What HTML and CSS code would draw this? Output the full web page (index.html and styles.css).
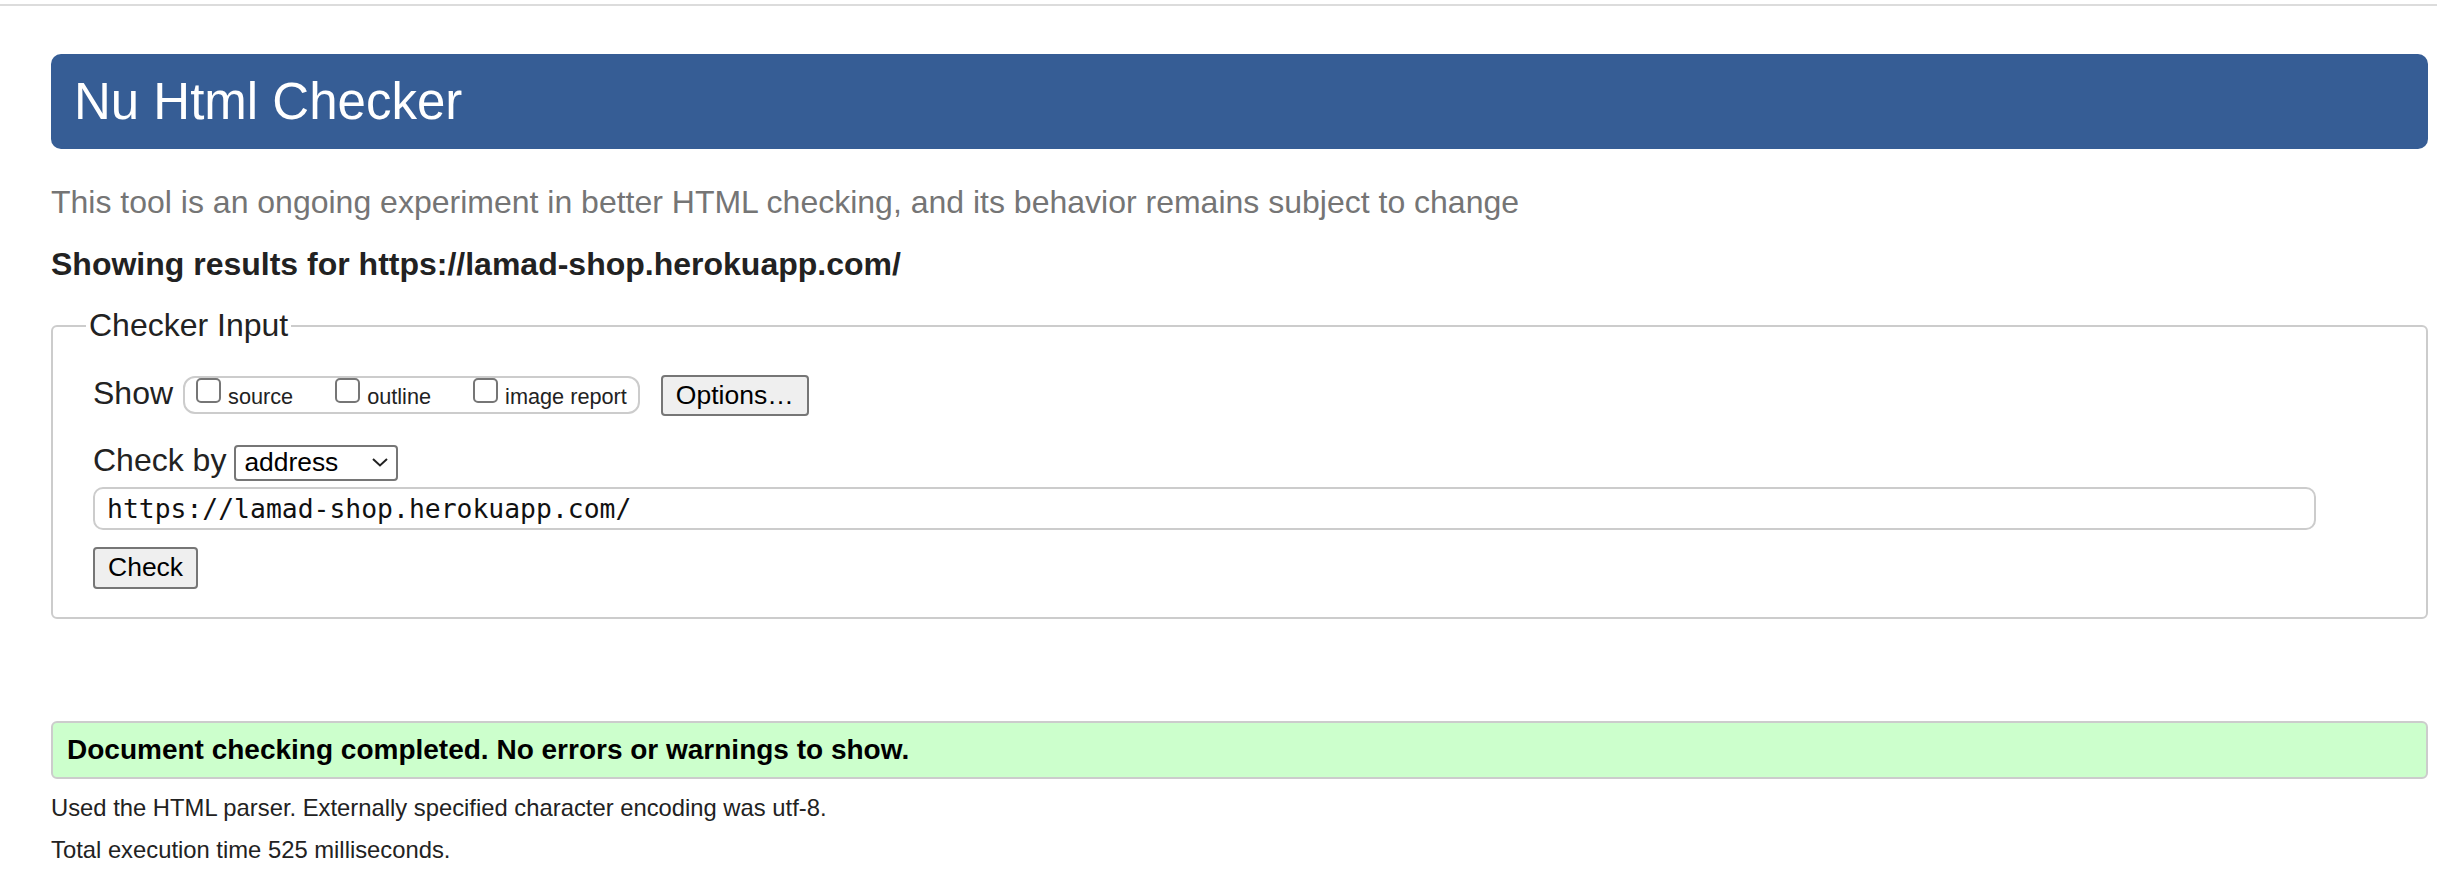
FILE: index.html
```html
<!DOCTYPE html>
<html lang="en">
<head>
<meta charset="utf-8">
<title>Showing results for https://lamad-shop.herokuapp.com/ - Nu Html Checker</title>
<link rel="stylesheet" href="styles.css">
</head>
<body>
<div class="topline"></div>
<div class="page">
  <h1 class="title">Nu Html Checker</h1>
  <p class="about">This tool is an ongoing experiment in better HTML checking, and its behavior remains subject to change</p>
  <p class="showing">Showing results for https://lamad-shop.herokuapp.com/</p>
  <form class="checker">
    <fieldset class="input-box">
      <legend>Checker Input</legend>
      <div class="row row-show">
        <span class="lbl">Show</span>
        <div class="group">
          <label class="opt"><input type="checkbox"><span>source</span></label>
          <label class="opt"><input type="checkbox"><span>outline</span></label>
          <label class="opt"><input type="checkbox"><span>image report</span></label>
        </div>
        <button type="button" class="btn options">Options…</button>
      </div>
      <div class="row row-by">
        <span class="lbl">Check by</span>
        <div class="select">
          <span>address</span>
          <svg class="chev" width="16" height="9" viewBox="0 0 16 9"><polyline points="1,1 8,7.5 15,1" fill="none" stroke="#222" stroke-width="2"/></svg>
        </div>
      </div>
      <input class="url" type="text" value="https://lamad-shop.herokuapp.com/">
      <button type="button" class="btn check">Check</button>
    </fieldset>
  </form>
  <div class="success">Document checking completed. No errors or warnings to show.</div>
  <p class="meta">Used the HTML parser. Externally specified character encoding was utf-8.</p>
  <p class="meta">Total execution time 525 milliseconds.</p>
</div>
</body>
</html>
```
FILE: styles.css
```css
body {
  margin: 0;
  font-family: "Liberation Sans", Arial, sans-serif;
  color: #222;
  background: #fff;
}
.topline {
  height: 2px;
  margin-top: 4px;
  background: #dcdcdc;
}
.page {
  padding: 0 9px 0 51px;
}
.title {
  margin: 48px 0 0;
  height: 95px;
  background: #365d95;
  color: #fff;
  border-radius: 10px;
  font-size: 51px;
  font-weight: normal;
  line-height: 95px;
  padding: 0 23px;
}
.about {
  margin: 35.4px 0 0;
  font-size: 32px;
  line-height: 37px;
  color: #757575;
}
.showing {
  margin: 24.6px 0 0;
  font-size: 32px;
  line-height: 37px;
  font-weight: bold;
}
.checker {
  margin: 25.5px 0 0;
}
.input-box {
  margin: 0;
  min-width: 0;
  border: 2px solid #ccc;
  border-radius: 6px;
  padding: 31.5px 0 28px 40px;
}
.input-box legend {
  font-size: 32px;
  line-height: 35px;
  padding: 0 3px;
  margin-left: -7px;
}
.row {
  display: flex;
  align-items: flex-start;
}
.lbl {
  font-size: 32px;
  line-height: 37px;
}
.row-show .lbl {
  margin-right: 10px;
}
.group {
  display: flex;
  align-items: flex-start;
  gap: 42px;
  height: 38px;
  box-sizing: border-box;
  border: 2px solid #ccc;
  border-radius: 12px;
  padding: 0 11px;
  margin-top: 1px;
  margin-right: 21px;
}
.opt {
  display: flex;
  align-items: flex-start;
  gap: 7px;
}
.opt input {
  -webkit-appearance: none;
  appearance: none;
  width: 25px;
  height: 25px;
  margin: 0;
  box-sizing: border-box;
  border: 2px solid #767676;
  border-radius: 5px;
  background: #fff;
}
.opt span {
  font-size: 21.7px;
  line-height: 25px;
  margin-top: 6px;
}
.btn {
  font-family: "Liberation Sans", Arial, sans-serif;
  font-size: 26.5px;
  color: #000;
  background: #efefef;
  border: 2px solid #767676;
  border-radius: 4px;
  padding: 0 13px;
  height: 41px;
  box-sizing: border-box;
}
.row-by {
  margin-top: 26.4px;
}
.row-by .lbl {
  margin-right: 8px;
}
.select {
  display: flex;
  align-items: center;
  justify-content: space-between;
  width: 164px;
  height: 36px;
  box-sizing: border-box;
  border: 2px solid #767676;
  border-radius: 4px;
  padding: 0 8px 0 8px;
  margin-top: 2.6px;
  font-size: 26.4px;
  color: #000;
  background: #fff;
}
.chev {
  display: block;
}
.url {
  display: block;
  box-sizing: border-box;
  width: calc(100% - 110px);
  height: 43px;
  margin: 6px 0 0;
  border: 2px solid #ccc;
  border-radius: 10px;
  padding: 0 12px;
  font-family: "DejaVu Sans Mono", monospace;
  font-size: 26.4px;
  color: #111;
  background: #fff;
  outline: none;
}
.check {
  display: block;
  margin-top: 17px;
  height: 42px;
}
.success {
  margin-top: 102px;
  height: 58px;
  box-sizing: border-box;
  border: 2px solid #ccc;
  border-radius: 6px;
  background: #ccffcc;
  padding: 0 14px;
  font-size: 28px;
  font-weight: bold;
  line-height: 54px;
  color: #000;
}
.meta {
  margin: 15.5px 0 0;
  font-size: 23.8px;
  line-height: 28px;
}
.meta + .meta {
  margin-top: 13.3px;
}
```
